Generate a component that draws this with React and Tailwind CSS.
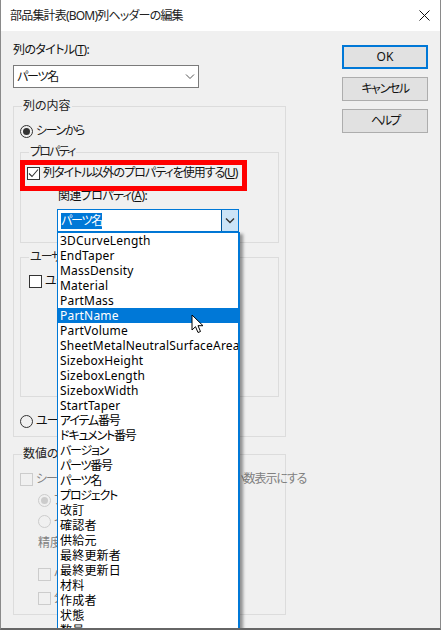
const FONT = "font-['Noto_Sans','Noto_Sans_CJK_JP',sans-serif] [font-feature-settings:'palt']";

const items = [
  "3DCurveLength", "EndTaper", "MassDensity", "Material", "PartMass", "PartName", "PartVolume",
  "SheetMetalNeutralSurfaceArea", "SizeboxHeight", "SizeboxLength", "SizeboxWidth", "StartTaper",
  "アイテム番号", "ドキュメント番号", "バージョン", "パーツ番号", "パーツ名", "プロジェクト", "改訂", "確認者",
  "供給元", "最終更新者", "最終更新日", "材料", "作成者", "状態", "数量",
];

const kanaItems = ["アイテム番号", "ドキュメント番号", "バージョン", "パーツ番号", "パーツ名", "プロジェクト"];

function Chevron({ dark }) {
  return (
    <svg width="10" height="6" viewBox="0 0 10 6">
      <path d="M1 0.5 L5 4.5 L9 0.5" fill="none" stroke={dark ? "#333" : "#555"} strokeWidth={dark ? 1.4 : 1} />
    </svg>
  );
}

function Check({ disabled, checked }) {
  return (
    <span className={`flex h-[13px] w-[13px] shrink-0 items-center justify-center border ${disabled ? "border-[#cccccc] bg-[#f0f0f0]" : "border-[#333333] bg-white"}`}>
      {checked && (
        <svg width="11" height="11" viewBox="0 0 11 11">
          <path d="M1 5.5 L4 8.5 L10 1.5" fill="none" stroke="#333" strokeWidth="1.1" />
        </svg>
      )}
    </span>
  );
}

function Radio({ disabled, checked }) {
  return (
    <span className={`flex h-[13px] w-[13px] shrink-0 items-center justify-center rounded-full border ${disabled ? "border-[#cccccc]" : "border-[#333333]"}`}>
      {checked && <span className={`h-[7px] w-[7px] rounded-full ${disabled ? "bg-[#cccccc]" : "bg-[#333333]"}`} />}
    </span>
  );
}

function Legend({ children, className = "" }) {
  return <span className={`absolute -top-[9px] left-[8px] bg-[#f0f0f0] px-px text-[12px] leading-[16px] text-[#222] ${className}`}>{children}</span>;
}

function Btn({ children, primary, className = "" }) {
  return (
    <button className={`flex h-[24px] w-[86px] items-center justify-center bg-[#e1e1e1] text-[12px] text-[#111] ${primary ? "border-2 border-[#0078d7]" : "border border-[#adadad]"} ${className}`}>
      {children}
    </button>
  );
}

export default function App() {
  return (
    <div className={`relative flex h-[630px] w-[441px] flex-col overflow-hidden border-x border-x-[#8a8a8a] border-b-2 border-b-[#666666] bg-[#f0f0f0] text-[12px] leading-[16px] text-[#111] ${FONT}`}>
      <div className="flex h-[31px] shrink-0 items-center justify-between bg-white pl-[9px] pr-[10px] text-[12px] text-[#222]">
        <span className="tracking-[-0.8px]">部品集計表(BOM)列ヘッダーの編集</span>
        <svg width="11" height="11" viewBox="0 0 11 11"><path d="M0.5 0.5 L10.5 10.5 M10.5 0.5 L0.5 10.5" stroke="#111" strokeWidth="1" /></svg>
      </div>

      <div className="flex flex-1 pl-[12px] pr-[12px]">
        <div className="w-[273px] shrink-0">
          <div className="mt-[11px] h-[16px] tracking-[-0.6px]">列のタイトル(<u>T</u>):</div>
          <div className="mt-[7px] flex h-[23px] w-[186px] items-center justify-between border border-[#7a7a7a] bg-white pl-[3px] pr-[3px]">
            <span className="tracking-[-1.2px]">パーツ名</span>
            <Chevron />
          </div>

          <div className="relative mt-[18px] h-[331px] border border-[#dcdcdc] px-[6px]">
            <Legend>列の内容</Legend>
            <div className="mt-[16px] flex h-[16px] items-center gap-[3px]"><Radio checked /><span className="tracking-[-1.4px]">シーンから</span></div>

            <div className="relative mt-[13px] h-[91px] border border-[#dcdcdc]">
              <Legend className="tracking-[-1.8px]">プロパティ</Legend>
              <div className="mt-[12px] flex h-[16px] items-center gap-[3px] pl-[6px]"><Check checked /><span className="tracking-[-1px]">列タイトル以外のプロパティを使用する(<u>U</u>)</span></div>
              <div className="mt-[7px] h-[16px] pl-[37px] tracking-[-0.6px]">関連プロパティ(<u>A</u>):</div>
              <div className="ml-[36px] mt-[5px] flex h-[23px] w-[182px] items-center justify-between border border-[#0078d7] bg-white pl-[3px]">
                <span className="bg-[#0078d7] text-white tracking-[-1.2px]">パーツ名</span>
                <span className="flex h-full w-[17px] items-center justify-center border-l border-[#005499] bg-[#cce4f7]"><Chevron dark /></span>
              </div>
            </div>

            <div className="relative mt-[14px] h-[140px] border border-[#dcdcdc]">
              <Legend className="tracking-[-1px]">ユーザー定義</Legend>
              <div className="mt-[15px] flex h-[16px] items-center gap-[3px] pl-[8px]"><Check /><span className="tracking-[-1px]">ユーザー定義</span></div>
            </div>

            <div className="mt-[16px] flex h-[16px] items-center gap-[3px]"><Radio /><span className="tracking-[-1px]">ユーザー定義</span></div>
          </div>

          <div className="relative mt-[17px] h-[161px] border border-[#dcdcdc] text-[#808080]">
            <Legend>数値の形式</Legend>
            <div className="mt-[16px] flex h-[16px] items-center gap-[3px] whitespace-nowrap pl-[6px]"><Check disabled /><span className="tracking-[-1.1px]">シーンの単位設定を使用して指定した桁の小数表示にする</span></div>
            <div className="mt-[5px] flex h-[16px] items-center gap-[3px] pl-[24px]"><Radio disabled checked /><span>プロパティ</span></div>
            <div className="mt-[5px] flex h-[16px] items-center gap-[3px] pl-[24px]"><Radio disabled /><span>インチ</span></div>
            <div className="mt-[6px] h-[16px] pl-[24px]">精度</div>
            <div className="mt-[15px] flex h-[16px] items-center gap-[3px] pl-[24px]"><Check disabled /><span>小数</span></div>
            <div className="mt-[8px] flex h-[16px] items-center gap-[3px] pl-[24px]"><Check disabled /><span>分数</span></div>
          </div>
        </div>

        <div className="ml-[56px] mt-[14px] flex flex-col gap-[8px]">
          <Btn primary>OK</Btn>
          <Btn className="tracking-[-1.4px]">キャンセル</Btn>
          <Btn className="tracking-[-2px]">ヘルプ</Btn>
        </div>
      </div>

      <div className="pointer-events-none absolute left-[19px] top-[160px] h-[31px] w-[227px] border-[5px] border-[#ff0000]" />

      <div className="absolute left-[56px] top-[232px] h-[400px] w-[183px] overflow-hidden border-l border-r-2 border-t border-[#0078d7] bg-white shadow-[3px_2px_3px_rgba(0,0,0,0.4)]">
        {items.map((t) => (
          <div key={t} className={`h-[15px] whitespace-nowrap pl-[2px] text-[12px] leading-[15px] ${kanaItems.includes(t) ? "tracking-[-1.2px]" : "tracking-[0.2px]"} ${t === "PartName" ? "bg-[#0078d7] text-white" : "text-black"}`}>{t}</div>
        ))}
      </div>

      <svg className="absolute left-[190px] top-[314px]" width="14" height="21" viewBox="0 0 14 21">
        <path d="M1 1 L1 16 L4.5 12.7 L7 18.5 L9.5 17.5 L7 11.7 L12 11.7 Z" fill="#fff" stroke="#000" strokeWidth="1" />
      </svg>
    </div>
  );
}
